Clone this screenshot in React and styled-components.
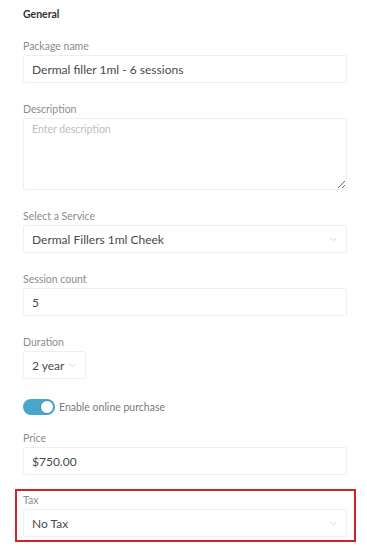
import React from "react";
import styled, { createGlobalStyle } from "styled-components";

const Global = createGlobalStyle`
  html, body { margin: 0; padding: 0; background: #ffffff; }
  body { font-family: Lato, "Open Sans", Arial, sans-serif; }
  * { box-sizing: border-box; }
`;

const Page = styled.div`
  width: 367px;
  min-height: 552px;
  padding: 7px 20px 0 23px;
  background: #fff;
`;

const Heading = styled.div`
  font-size: 10.5px;
  line-height: 14px;
  font-weight: 700;
  color: #333;
  margin-bottom: 19px;
`;

const Field = styled.div`
  display: flex;
  flex-direction: column;
  margin-bottom: ${(p) => p.$after ?? 20}px;
`;

const Label = styled.label`
  font-size: 10.5px;
  line-height: 12px;
  color: #8c8c8c;
  margin-bottom: 3px;
`;

const Box = styled.div`
  height: 28px;
  width: ${(p) => (p.$width ? `${p.$width}px` : "100%")};
  border: 1px solid #efefef;
  border-radius: 2px;
  background: #fff;
  display: flex;
  align-items: center;
  justify-content: space-between;
  padding: 0 9px 0 8px;
  font-size: 12px;
  color: #4a4a4a;
`;

const Area = styled.textarea`
  height: 72px;
  width: 100%;
  border: 1px solid #efefef;
  border-radius: 2px;
  padding: 4px 8px;
  font-family: inherit;
  font-size: 10.5px;
  color: #474747;
  resize: vertical;
  outline: none;
  display: block;
  &::placeholder { color: #bdbdbd; }
`;

const Chevron = () => (
  <svg width="7" height="5" viewBox="0 0 7 5" fill="none">
    <path d="M0.5 0.7 L3.5 3.8 L6.5 0.7" stroke="#cfcfcf" strokeWidth="0.9" />
  </svg>
);

const ToggleRow = styled.div`
  display: flex;
  align-items: center;
  gap: 4px;
  height: 16px;
  margin-bottom: 17px;
`;

const Track = styled.div`
  width: 32px;
  height: 16px;
  border-radius: 8px;
  background: #48a6cc;
  position: relative;
`;

const Knob = styled.div`
  position: absolute;
  top: 1px;
  right: 1px;
  width: 14px;
  height: 14px;
  border-radius: 50%;
  background: #fff;
  border: 1px solid #3d94ba;
`;

const ToggleText = styled.span`
  font-size: 10.5px;
  color: #7a7a7a;
`;

const Highlight = styled.div`
  margin: -6px -9px 0 -8px;
  border: 2px solid #d2232a;
  padding: 3px 7px 3px 6px;
`;

export default function App() {
  return (
    <>
      <Global />
      <Page>
        <Heading>General</Heading>
        <Field>
          <Label>Package name</Label>
          <Box>Dermal filler 1ml - 6 sessions</Box>
        </Field>
        <Field>
          <Label>Description</Label>
          <Area placeholder="Enter description" />
        </Field>
        <Field>
          <Label>Select a Service</Label>
          <Box>
            Dermal Fillers 1ml Cheek
            <Chevron />
          </Box>
        </Field>
        <Field>
          <Label>Session count</Label>
          <Box>5</Box>
        </Field>
        <Field>
          <Label>Duration</Label>
          <Box $width={63}>
            2 year
            <Chevron />
          </Box>
        </Field>
        <ToggleRow>
          <Track>
            <Knob />
          </Track>
          <ToggleText>Enable online purchase</ToggleText>
        </ToggleRow>
        <Field>
          <Label>Price</Label>
          <Box>$750.00</Box>
        </Field>
        <Highlight>
          <Field $after={0}>
            <Label>Tax</Label>
            <Box>
              No Tax
              <Chevron />
            </Box>
          </Field>
        </Highlight>
      </Page>
    </>
  );
}
